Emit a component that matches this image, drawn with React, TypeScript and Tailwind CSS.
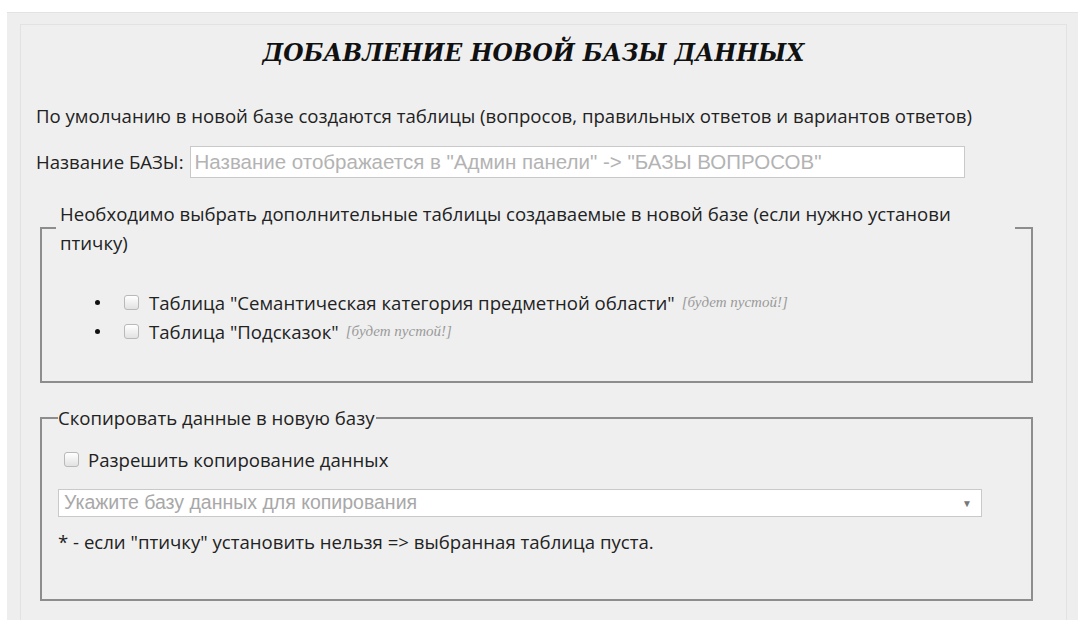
import { useState } from 'react';

const body = "font-['Open_Sans',_'Liberation_Sans',_sans-serif]";

function Box({ checked, onToggle }: { checked: boolean; onToggle: () => void }) {
  return (
    <span
      onClick={onToggle}
      className="inline-flex h-[15px] w-[15px] shrink-0 items-center justify-center rounded-[3px] border border-[#b9b9b9] bg-gradient-to-b from-white to-[#e2e2e2] text-[11px] leading-none text-[#333]"
    >
      {checked ? '✓' : ''}
    </span>
  );
}

function Empty() {
  return (
    <span className="ml-[7px] font-['Liberation_Serif',_serif] text-[15px] italic text-[#9a9a9a]">
      [будет пустой!]
    </span>
  );
}

export default function App() {
  const [extra, setExtra] = useState<Record<string, boolean>>({});
  const [allowCopy, setAllowCopy] = useState(false);
  const [name, setName] = useState('');

  const toggle = (k: string) => setExtra((s) => ({ ...s, [k]: !s[k] }));

  return (
    <div className={`min-h-screen bg-white pt-[12px] pl-[7px] ${body} text-[18.6px] text-[#222]`}>
      {/* outer panel */}
      <div className="h-[608px] w-[1071px] border-t border-[#e3e3e3] bg-[#eeeeee] pt-[11px] pl-[13px] pr-[4px]">
        <div className="h-[596px] w-[1047px] border-l border-t border-r border-[#e2e2e2] bg-[#efefef] px-[15px]">
          <h1 className="mt-[12px] pr-[20px] text-center font-['DejaVu_Serif',_serif] text-[23.3px] font-bold italic leading-[32px] text-[#111]">
            ДОБАВЛЕНИЕ НОВОЙ БАЗЫ ДАННЫХ
          </h1>

          <p className="mt-[34px] leading-[26px]">
            По умолчанию в новой базе создаются таблицы (вопросов, правильных ответов и вариантов ответов)
          </p>

          <div className="mt-[17px] flex items-center">
            <label className="leading-[26px]">Название БАЗЫ:</label>
            <input
              value={name}
              onChange={(e) => setName(e.target.value)}
              placeholder={'Название отображается в "Админ панели" -> "БАЗЫ ВОПРОСОВ"'}
              className="ml-[6px] h-[32px] w-[775px] border border-[#c9c9c9] bg-white px-[4px] font-['Liberation_Sans',_sans-serif] text-[20.5px] outline-none placeholder:text-[#b3b3b3]"
            />
          </div>

          {/* extra tables */}
          <fieldset className="mt-[21px] ml-[4px] h-[184px] w-[993px] border-2 border-[#8d8d8d] pl-[14px]">
            <legend className="w-[959px] px-[4px] leading-[29px]">
              Необходимо выбрать дополнительные таблицы создаваемые в новой базе (если нужно установи
              <br />
              птичку)
            </legend>
            <ul className="mt-[31px] leading-[29px]">
              <li className="flex items-center">
                <span className="ml-[39px] h-[5px] w-[5px] rounded-full bg-[#111]" />
                <span className="ml-[24px]">
                  <Box checked={!!extra.sem} onToggle={() => toggle('sem')} />
                </span>
                <span className="ml-[10px]">Таблица "Семантическая категория предметной области"</span>
                <Empty />
              </li>
              <li className="flex items-center">
                <span className="ml-[39px] h-[5px] w-[5px] rounded-full bg-[#111]" />
                <span className="ml-[24px]">
                  <Box checked={!!extra.hint} onToggle={() => toggle('hint')} />
                </span>
                <span className="ml-[10px]">Таблица "Подсказок"</span>
                <Empty />
              </li>
            </ul>
          </fieldset>

          {/* copy data */}
          <fieldset className="mt-[22px] ml-[4px] h-[196px] w-[993px] border-2 border-[#8d8d8d] pl-[16px]">
            <legend className="pr-[2px] leading-[26px]">Скопировать данные в новую базу</legend>
            <div className="mt-[16px] flex items-center leading-[26px]">
              <span className="ml-[6px]">
                <Box checked={allowCopy} onToggle={() => setAllowCopy(!allowCopy)} />
              </span>
              <span className="ml-[9px]">Разрешить копирование данных</span>
            </div>
            <div className="mt-[16px] flex h-[28px] w-[924px] items-center justify-between border border-[#c9c9c9] bg-white px-[5px] font-['Liberation_Sans',_sans-serif] text-[19.5px] text-[#a8a8a8]">
              <span>Укажите базу данных для копирования</span>
              <span className="mr-[4px] text-[10px] text-[#777]">▼</span>
            </div>
            <p className="mt-[12px] leading-[26px]">* - если "птичку" установить нельзя =&gt; выбранная таблица пуста.</p>
          </fieldset>
        </div>
      </div>
    </div>
  );
}
